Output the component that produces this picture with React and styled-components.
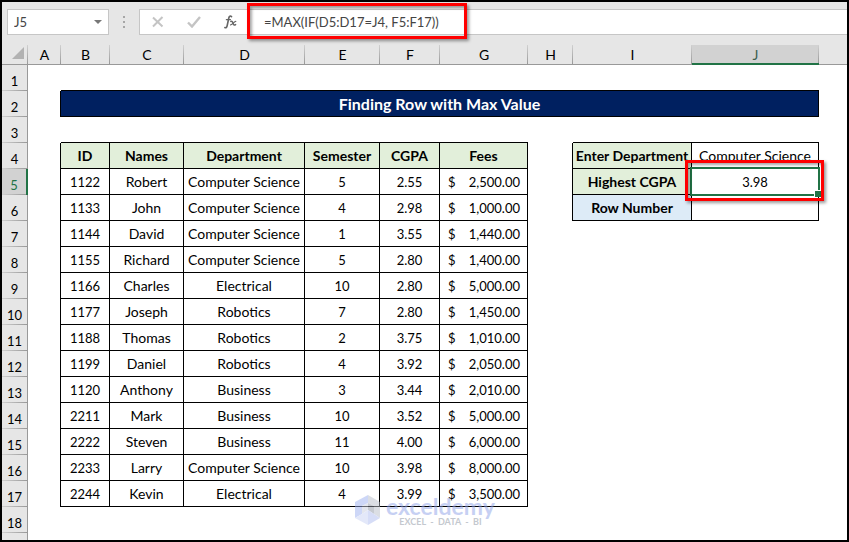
import React from 'react';
import styled, { createGlobalStyle, css } from 'styled-components';

const GlobalStyle = createGlobalStyle`
  * {
    box-sizing: border-box;
  }

  body {
    margin: 0;
    background: #fff;
    color: #000;
    font-family: Lato, "Liberation Sans", sans-serif;
  }

  button,
  input {
    font: inherit;
  }
`;

const Frame = styled.main`
  display: flex;
  flex-direction: column;
  height: 100vh;
  border: 2px solid #000;
  overflow: hidden;
`;

const Toolbar = styled.div`
  display: flex;
  flex: none;
  height: 43px;
  padding: 7px 0 10px 5px;
  background: #e6e6e6;
`;

const NameBox = styled.div`
  display: flex;
  width: 102px;
  background: #fff;
  border: 1px solid #c6c6c6;
`;

const NameInput = styled.input`
  flex: 1;
  min-width: 0;
  padding: 0 0 0 6px;
  border: 0;
  background: none;
  color: #444;
  font-size: 13px;
  outline: none;
`;

const PlainButton = styled.button`
  display: flex;
  align-items: center;
  justify-content: center;
  width: ${({ $width }) => $width}px;
  padding: 0;
  border: 0;
  background: none;
  cursor: pointer;
`;

const Grip = styled.div`
  display: flex;
  flex-direction: column;
  align-items: center;
  justify-content: center;
  gap: 3px;
  width: 30px;
`;

const GripDot = styled.span`
  width: 2px;
  height: 2px;
  background: #a6a6a6;
`;

const Actions = styled.div`
  display: flex;
  width: 109px;
  background: #fff;
  border: 1px solid #c6c6c6;
  border-right: 0;
`;

const Formula = styled.div`
  position: relative;
  display: flex;
  flex: 1;
  background: #fff;
  border: 1px solid #c6c6c6;
  border-width: 1px 0;
`;

const FormulaInput = styled.input`
  flex: 1;
  padding: 0 0 0 16px;
  border: 0;
  background: none;
  color: #444;
  font-size: 13px;
  outline: none;
`;

const Highlight = styled.span`
  position: absolute;
  z-index: 2;
  border: 3px solid #f00;
  box-shadow: 2px 2px 3px rgba(0, 0, 0, 0.4), inset 2px 2px 3px rgba(0, 0, 0, 0.35);
  pointer-events: none;
`;

const FormulaHighlight = styled(Highlight)`
  top: -7px;
  left: -1px;
  width: 220px;
  height: 36px;
`;

const ResultHighlight = styled(Highlight)`
  top: -9px;
  left: -7px;
  right: -6px;
  bottom: -7px;
`;

const Sheet = styled.div`
  position: relative;
  flex: 1;
  min-height: 0;
  overflow: hidden;
`;

const Grid = styled.table`
  width: 100%;
  table-layout: fixed;
  border-collapse: separate;
  border-spacing: 0;
`;

const Column = styled.col`
  width: ${({ $width }) => ($width ? `${$width}px` : 'auto')};
`;

const ColumnHead = styled.th`
  height: 20px;
  padding: 0;
  border-bottom: 1px solid #999;
  background: linear-gradient(#d0d0d0, #999) right / 1px 100% no-repeat #e6e6e6;
  font-size: 14px;
  font-weight: 400;
  line-height: 18px;

  &:last-child {
    background: #e6e6e6;
  }

  ${({ $active }) =>
    $active &&
    css`
      border-bottom: 2px solid #217346;
      background-color: #d2d2d2;
      color: #3f5f4f;
      line-height: 17px;
    `}
`;

const Corner = styled.td`
  height: 20px;
  padding: 0 4px 3px 0;
  border-bottom: 1px solid #999;
  background: linear-gradient(#d0d0d0, #999) right / 1px 100% no-repeat #e6e6e6;
  line-height: 0;
  text-align: right;
`;

const RowHead = styled.th`
  height: 26px;
  padding: 6px 0 0;
  border-right: 1px solid #999;
  background: linear-gradient(90deg, #d0d0d0, #999) bottom / 100% 1px no-repeat #e6e6e6;
  font-size: 13px;
  font-weight: 400;
  line-height: 20px;
  ${({ $active }) =>
    $active &&
    css`
      border-right: 2px solid #217346;
      background-color: #d2d2d2;
      color: #217346;
    `}
`;

const fills = {
  green: '#e2efda',
  blue: '#ddebf7',
  navy: '#002060',
};

const Cell = styled.td`
  position: relative;
  height: 26px;
  padding: 0;
  border: 0 solid #000;
  border-right-width: ${({ $right }) => ($right ? 1 : 0)}px;
  border-bottom-width: ${({ $bottom }) => ($bottom ? 1 : 0)}px;
  background: ${({ $fill }) => fills[$fill] || '#fff'};
  color: ${({ $fill }) => ($fill === 'navy' ? '#fff' : '#000')};
  font-size: ${({ $numeric }) => ($numeric ? 13 : 14)}px;
  font-weight: ${({ $bold }) => ($bold ? 700 : 400)};
  line-height: 25px;
  text-align: center;
  white-space: nowrap;
  ${({ $numeric }) =>
    $numeric &&
    css`
      padding-top: 2px;
      line-height: 23px;
    `}
  ${({ $selected }) =>
    $selected &&
    css`
      z-index: 1;
    `}
`;

const TitleCell = styled(Cell)`
  font-size: 16px;
`;

const Money = styled.span`
  display: flex;
  justify-content: space-between;
  padding: 0 7px 0 8px;
`;

const Selection = styled.span`
  position: absolute;
  top: -2px;
  right: -2px;
  bottom: -2px;
  left: -2px;
  border: 2px solid #217346;
  pointer-events: none;

  &::after {
    content: '';
    position: absolute;
    right: -3px;
    bottom: -3px;
    width: 6px;
    height: 6px;
    border: 1px solid #fff;
    border-width: 1px 0 0 1px;
    background: #217346;
  }
`;

const Watermark = styled.div`
  position: absolute;
  z-index: 1;
  top: 449px;
  left: 350px;
  display: flex;
  align-items: center;
  gap: 4px;
  opacity: 0.5;
  pointer-events: none;
`;

const Brand = styled.div`
  color: #8fa3e8;
  font-size: 23px;
  font-weight: 700;
  line-height: 22px;
`;

const Tagline = styled.div`
  color: #8b93a0;
  font-size: 9px;
  font-weight: 700;
  line-height: 9px;
  text-align: center;
  white-space: pre;
`;

const columns = [
  ['A', 33],
  ['B', 49],
  ['C', 74],
  ['D', 121],
  ['E', 75],
  ['F', 60],
  ['G', 88],
  ['H', 45],
  ['I', 119],
  ['J', 127],
];

const headings = ['ID', 'Names', 'Department', 'Semester', 'CGPA', 'Fees'];

const students = [
  ['1122', 'Robert', 'Computer Science', '5', '2.55', '2,500.00'],
  ['1133', 'John', 'Computer Science', '4', '2.98', '1,000.00'],
  ['1144', 'David', 'Computer Science', '1', '3.55', '1,440.00'],
  ['1155', 'Richard', 'Computer Science', '5', '2.80', '1,400.00'],
  ['1166', 'Charles', 'Electrical', '10', '2.80', '5,000.00'],
  ['1177', 'Joseph', 'Robotics', '7', '2.80', '1,450.00'],
  ['1188', 'Thomas', 'Robotics', '2', '3.75', '1,010.00'],
  ['1199', 'Daniel', 'Robotics', '4', '3.92', '2,050.00'],
  ['1120', 'Anthony', 'Business', '3', '3.44', '2,010.00'],
  ['2211', 'Mark', 'Business', '10', '3.52', '5,000.00'],
  ['2222', 'Steven', 'Business', '11', '4.00', '6,000.00'],
  ['2233', 'Larry', 'Computer Science', '10', '3.98', '8,000.00'],
  ['2244', 'Kevin', 'Electrical', '4', '3.99', '3,500.00'],
];

const lookup = {
  4: { label: 'Enter Department', value: 'Computer Science', fill: 'green' },
  5: { label: 'Highest CGPA', value: '3.98', fill: 'green', selected: true },
  6: { label: 'Row Number', value: '', fill: 'blue' },
};

const EmptyRow = ({ number, underline = [] }) => (
  <tr>
    <RowHead scope="row">{number}</RowHead>
    {columns.map(([name]) => (
      <Cell key={name} $bottom={underline.includes(name)} />
    ))}
    <Cell />
  </tr>
);

const LookupCells = ({ entry }) => {
  if (!entry) {
    return (
      <>
        <Cell />
        <Cell />
        <Cell />
      </>
    );
  }

  return (
    <>
      <Cell $right />
      <Cell as="th" scope="row" $fill={entry.fill} $bold $right $bottom>
        {entry.label}
      </Cell>
      <Cell $right $bottom $numeric={entry.selected} $selected={entry.selected}>
        {entry.value}
        {entry.selected && (
          <>
            <Selection />
            <ResultHighlight />
          </>
        )}
      </Cell>
    </>
  );
};

const StudentRow = ({ number, student }) => (
  <tr>
    <RowHead scope="row" $active={number === 5}>
      {number}
    </RowHead>
    <Cell $right />
    {student.map((value, index) => (
      <Cell key={headings[index]} $right $bottom $numeric={index !== 1 && index !== 2}>
        {headings[index] === 'Fees' ? (
          <Money>
            <span>$</span>
            <span>{value}</span>
          </Money>
        ) : (
          value
        )}
      </Cell>
    ))}
    <LookupCells entry={lookup[number]} />
    <Cell />
  </tr>
);

const FormulaBar = () => (
  <Toolbar>
    <NameBox>
      <NameInput aria-label="Name box" defaultValue="J5" />
      <PlainButton $width={20} aria-label="Show names">
        <svg width="8" height="4" viewBox="0 0 8 4">
          <path d="M0 0h8L4 4z" fill="#777" />
        </svg>
      </PlainButton>
    </NameBox>
    <Grip>
      <GripDot />
      <GripDot />
      <GripDot />
    </Grip>
    <Actions>
      <PlainButton $width={36} aria-label="Cancel">
        <svg width="12" height="12" viewBox="0 0 12 12">
          <path d="M1 1.5l9.500 9M10.500 1L1 10.500" fill="none" stroke="#c4c4c4" strokeWidth="2" />
        </svg>
      </PlainButton>
      <PlainButton $width={36} aria-label="Enter">
        <svg width="14" height="12" viewBox="0 0 14 12">
          <path d="M1 6.500l4 4L13 1" fill="none" stroke="#c4c4c4" strokeWidth="2.400" />
        </svg>
      </PlainButton>
      <PlainButton $width={36} aria-label="Insert function">
        <svg width="13" height="14" viewBox="0 0 13 14" fill="none" stroke="#666" strokeLinecap="round">
          <path d="M7.500 1.600C6.400.600 5.200 1 4.800 3L3.200 10.500C2.800 12.500 1.800 13.200.9 12.500" strokeWidth="1.600" />
          <path d="M2.400 4.700h4" strokeWidth="1.300" />
          <path d="M6.800 6.500c1.400-.6 1.900.5 2.300 1.900s1 2.100 2.500 1.200" strokeWidth="1.500" />
          <path d="M11.800 6.300c-1.700 0-3 3.500-5.200 3.600" strokeWidth="1.200" />
        </svg>
      </PlainButton>
    </Actions>
    <Formula>
      <FormulaInput aria-label="Formula" defaultValue="=MAX(IF(D5:D17=J4, F5:F17))" />
      <FormulaHighlight />
    </Formula>
  </Toolbar>
);

const Logo = () => (
  <svg width="30" height="32" viewBox="0 0 30 32">
    <path d="M16 1L3 8v16l7-4v-8l6-3z" fill="#9db0f0" />
    <path d="M16 1l12 7v16l-6-4v-8l-6-3z" fill="#b9bfca" />
    <path d="M16 9l6 3v8l-6-4z" fill="#8f96a5" />
    <path d="M10 12l6-3v7l-6 4z" fill="#c9cfdf" />
    <path d="M3 24l7-4 6-4v15z" fill="#c9d2f5" />
    <path d="M16 16l6 4 6 4-12 7z" fill="#aebcf0" />
  </svg>
);

const App = () => (
  <>
    <GlobalStyle />
    <Frame>
      <FormulaBar />
      <Sheet>
        <Grid>
          <colgroup>
            <Column $width={26} />
            {columns.map(([name, width]) => (
              <Column key={name} $width={width} />
            ))}
            <Column />
          </colgroup>
          <thead>
            <tr>
              <Corner>
                <svg width="12" height="12" viewBox="0 0 12 12">
                  <path d="M12 0v12H0z" fill="#b2b2b2" />
                </svg>
              </Corner>
              {columns.map(([name]) => (
                <ColumnHead key={name} scope="col" $active={name === 'J'}>
                  {name}
                </ColumnHead>
              ))}
              <ColumnHead />
            </tr>
          </thead>
          <tbody>
            <EmptyRow number={1} underline={['B', 'C', 'D', 'E', 'F', 'G', 'H', 'I', 'J']} />
            <tr>
              <RowHead scope="row">2</RowHead>
              <Cell $right />
              <TitleCell colSpan={9} $fill="navy" $bold $right $bottom>
                Finding Row with Max Value
              </TitleCell>
              <Cell />
            </tr>
            <EmptyRow number={3} underline={['B', 'C', 'D', 'E', 'F', 'G', 'I', 'J']} />
            <tr>
              <RowHead scope="row">4</RowHead>
              <Cell $right />
              {headings.map((heading) => (
                <Cell as="th" scope="col" key={heading} $fill="green" $bold $right $bottom>
                  {heading}
                </Cell>
              ))}
              <LookupCells entry={lookup[4]} />
              <Cell />
            </tr>
            {students.map((student, index) => (
              <StudentRow key={student[0]} number={index + 5} student={student} />
            ))}
            <EmptyRow number={18} />
            <EmptyRow number="" />
          </tbody>
        </Grid>
        <Watermark>
          <Logo />
          <div>
            <Brand>exceldemy</Brand>
            <Tagline>EXCEL  -  DATA  -  BI</Tagline>
          </div>
        </Watermark>
      </Sheet>
    </Frame>
  </>
);

export default App;
